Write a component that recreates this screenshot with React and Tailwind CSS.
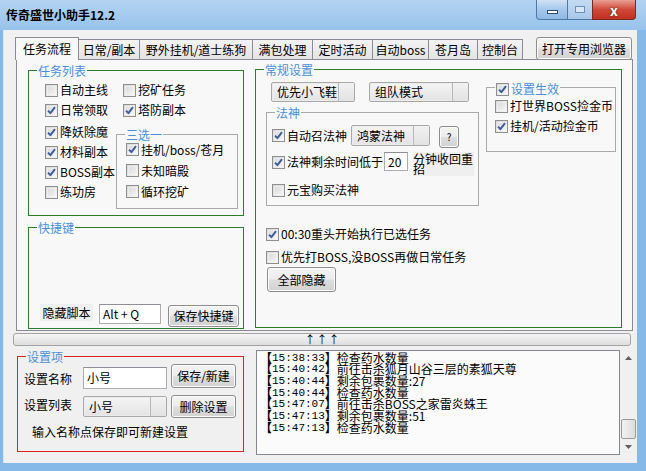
import clsx from 'clsx';

const FONT = "font-['Noto_Sans_CJK_SC','Noto_Sans',sans-serif]";

const Check = ({ checked }) => (
  <span className="relative flex h-[13px] w-[13px] shrink-0 items-center justify-center border border-[#8e8f8f] bg-[linear-gradient(135deg,#d6d6d6,#f7f7f7)]">
    <span className="absolute inset-[1px] border border-[#f6f6f6]/60" />
    {checked && (
      <svg width="11" height="11" viewBox="0 0 11 11" className="relative">
        <path d="M2 5.6 L4.4 8.2 L9 2.2" fill="none" stroke="#3b5b9c" strokeWidth="1.9" strokeLinejoin="round" />
      </svg>
    )}
  </span>
);

const CheckItem = ({ checked, label, className }) => (
  <div className={clsx('flex h-[20px] items-center gap-[2px] whitespace-nowrap', className)}>
    <Check checked={checked} />
    <span className="leading-none">{label}</span>
  </div>
);

const Group = ({ title, color = 'border-[#2b7d2b]', titleBg = 'bg-[#f8f8f8]', className, children, titleNode }) => (
  <div className={clsx('relative border', color, className)}>
    <span className={clsx('absolute left-[8px] top-[-9px] px-[1px] leading-[17px] text-[#4a8fdc]', titleBg)}>
      {titleNode || title}
    </span>
    {children}
  </div>
);

const Btn = ({ className, children }) => (
  <div className={clsx('flex items-center justify-center whitespace-nowrap rounded-[3px] border border-[#8d8d8d] bg-[linear-gradient(#f4f4f4,#ececec_48%,#dedede_52%,#d2d2d2)] shadow-[inset_0_0_0_1px_#fbfbfb]', className)}>
    {children}
  </div>
);

const Combo = ({ className, text }) => (
  <div className={clsx('flex rounded-[2px] border border-[#a9a9a9] bg-[#ececec]', className)}>
    <div className="m-[1px] flex flex-1 items-center bg-[linear-gradient(#f4f4f4,#e4e4e4)] pl-[4px] leading-none whitespace-nowrap">{text}</div>
    <div className="w-[16px] border-l border-[#b8b8b8] bg-[linear-gradient(#f2f2f2,#e2e2e2)]" />
  </div>
);

const Input = ({ className, text }) => (
  <div className={clsx('flex items-center border border-[#abadb3] border-t-[#8e9097] bg-white pl-[3px] leading-none whitespace-nowrap', className)}>
    {text}
  </div>
);

const tabs = [
  ['任务流程', 'w-[64px]'],
  ['日常/副本', 'w-[62px]'],
  ['野外挂机/道士练狗', 'w-[114px]'],
  ['满包处理', 'w-[61px]'],
  ['定时活动', 'w-[61px]'],
  ['自动boss', 'w-[57px]'],
  ['苍月岛', 'w-[50px]'],
  ['控制台', 'w-[46px]'],
];

const logs = [
  ['15:38:33', '检查药水数量'],
  ['15:40:42', '前往击杀狐月山谷三层的素狐天尊'],
  ['15:40:44', '剩余包裹数量:27'],
  ['15:40:44', '检查药水数量'],
  ['15:47:07', '前往击杀BOSS之家雷炎蛛王'],
  ['15:47:13', '剩余包裹数量:51'],
  ['15:47:13', '检查药水数量'],
];

export default function App() {
  return (
    <div className={clsx('flex h-[471px] w-[646px] flex-col overflow-hidden bg-[#86b9e8] text-[12px] text-black', FONT)}>
      {/* title bar */}
      <div className="flex h-[30px] shrink-0 items-start bg-[linear-gradient(#b3d3f1,#97c3ec)]">
        <div className="mt-[6px] pl-[6px] text-[12px] font-bold leading-[18px]">传奇盛世小助手12.2</div>
        <div className="ml-auto mr-[10px] flex h-[20px]">
          <div className="flex w-[32px] items-center justify-center rounded-bl-[4px] border border-t-0 border-[#4f78a6] bg-[linear-gradient(#cfe2f5,#a6c7ea_50%,#8fb8e3)]">
            <span className="mt-[5px] h-[4px] w-[11px] border border-[#2f4b6b] bg-white" />
          </div>
          <div className="flex w-[24px] items-center justify-center border-b border-[#4f78a6] bg-[linear-gradient(#c3dbf2,#a8c9ea)]">
            <span className="h-[7px] w-[10px] border border-[#6f8fb3] bg-[#d7e6f5]" />
          </div>
          <div className="flex w-[44px] items-center justify-center rounded-br-[4px] border border-t-0 border-[#7a2a22] bg-[linear-gradient(#e8a092,#d0493a_50%,#c0301f)]">
            <span className="text-[14px] font-bold leading-none text-white [text-shadow:0_0_2px_#3a1010]">x</span>
          </div>
        </div>
      </div>

      {/* client */}
      <div className="mb-[8px] ml-[4px] mr-[9px] flex flex-1 flex-col bg-[#f0f0f0] shadow-[-1px_0_0_#d6e8f8]">
        {/* tab strip */}
        <div className="ml-[11px] mr-[5px] mt-[7px] flex h-[22px] items-end">
          {tabs.map(([t, w], i) => (
            <div
              key={t}
              className={clsx(
                'relative -ml-px flex items-center justify-center whitespace-nowrap border border-[#898c95] first:ml-0',
                w,
                i === 0
                  ? 'z-10 h-[23px] -mb-px border-b-0 bg-[#f8f8f8] pb-[1px]'
                  : 'h-[20px] border-b-0 bg-[linear-gradient(#f3f3f3,#e4e4e4)]'
              )}
            >
              {t}
            </div>
          ))}
          <Btn className="relative z-10 mb-[-1px] ml-auto h-[23px] w-[96px]">打开专用浏览器</Btn>
        </div>

        {/* tab page */}
        <div className="ml-[12px] flex h-[272px] w-[617px] border border-[#898c95] bg-[#f8f8f8] pl-[11px] pt-[10px]">
          {/* left column */}
          <div className="flex w-[216px] flex-col">
            <Group title="任务列表" className="flex h-[146px] pl-[16px] pt-[9px]">
              <div className="flex w-[71px] flex-col">
                <CheckItem label="自动主线" />
                <CheckItem checked label="日常领取" />
                <CheckItem checked label="降妖除魔" className="mt-[2px]" />
                <CheckItem checked label="材料副本" />
                <CheckItem checked label="BOSS副本" />
                <CheckItem label="练功房" />
              </div>
              <div className="flex flex-col">
                <CheckItem label="挖矿任务" className="pl-[7px]" />
                <CheckItem checked label="塔防副本" className="pl-[7px]" />
                <Group title="三选一" color="border-[#a9a9a9]" className="mt-[14px] flex h-[75px] w-[122px] flex-col pl-[9px] pt-[4px]">
                  <CheckItem checked label="挂机/boss/苍月" className="h-[21px]" />
                  <CheckItem label="未知暗殿" className="h-[21px]" />
                  <CheckItem label="循环挖矿" className="h-[21px]" />
                </Group>
              </div>
            </Group>
            <Group title="快捷键" className="mt-[11px] flex h-[102px] items-start pt-[76px]">
              <div className="ml-[11px] flex h-[17px] w-[53px] items-center justify-center bg-[#efefef]">隐藏脚本</div>
              <Input className="ml-[6px] h-[20px] w-[62px]" text="Alt + Q" />
              <Btn className="ml-[7px] mt-[1px] h-[22px] w-[71px]">保存快捷键</Btn>
            </Group>
          </div>

          {/* right column */}
          <Group title="常规设置" className="-mt-px ml-[11px] flex h-[259px] w-[367px] flex-col pl-[10px]">
            <div className="flex">
              <div className="flex w-[213px] flex-col">
                <div className="flex pl-[5px] pt-[12px]">
                  <Combo className="h-[20px] w-[84px]" text="优先小飞鞋" />
                  <Combo className="ml-[14px] h-[20px] w-[100px]" text="组队模式" />
                </div>
                <Group title="法神" color="border-[#a9a9a9]" className="mt-[10px] flex h-[94px] flex-col pl-[5px] pt-[11px]">
                  <div className="flex h-[23px] items-center">
                    <CheckItem checked label="自动召法神" className="w-[79px]" />
                    <Combo className="h-[21px] w-[79px]" text="鸿蒙法神" />
                    <Btn className="ml-[9px] mt-[2px] h-[22px] w-[20px] text-[10px]">?</Btn>
                  </div>
                  <div className="mt-[5px] flex items-start">
                    <CheckItem checked label="法神剩余时间低于" className="w-[112px]" />
                    <Input className="h-[19px] w-[24px] pl-[2px]" text="20" />
                    <div className="ml-[5px] h-[24px] w-[61px] bg-[#efefef] pt-[2px] leading-[10px]">分钟收回重招</div>
                  </div>
                  <CheckItem label="元宝购买法神" className="mt-[4px]" />
                </Group>
              </div>
              <Group
                titleNode={<CheckItem checked label="设置生效" className="h-[17px]" />}
                color="border-[#a9a9a9]"
                className="ml-[7px] mt-[17px] flex h-[65px] w-[130px] flex-col pl-[8px] pt-[8px]"
              >
                <CheckItem label="打世界BOSS捡金币" />
                <CheckItem checked label="挂机/活动捡金币" />
              </Group>
            </div>
            <CheckItem checked label="00:30重头开始执行已选任务" className="mt-[18px]" />
            <CheckItem label="优先打BOSS,没BOSS再做日常任务" className="mt-[3px]" />
            <Btn className="ml-[1px] h-[25px] w-[69px]">全部隐藏</Btn>
          </Group>
        </div>

        {/* splitter */}
        <div className="ml-[9px] mt-[2px] flex h-[13px] w-[618px] items-center justify-center rounded-[3px] border border-[#a3a3a3] bg-[linear-gradient(#f5f5f5,#dedede)]">
          <span className="w-[12px] text-center text-[11px] leading-none">↑</span>
          <span className="w-[12px] text-center text-[11px] leading-none">↑</span>
          <span className="w-[12px] text-center text-[11px] leading-none">↑</span>
        </div>

        {/* bottom */}
        <div className="flex flex-1 items-start">
          <div className="ml-[13px] mt-[10px] h-[96px] w-[227px]">
            <Group title="设置项" color="border-[#d9232b]" titleBg="bg-[#f0f0f0]" className="flex h-full flex-col pl-[6px] pt-[7px]">
              <div className="flex items-start">
                <div className="mt-[6px] w-[59px] leading-[17px]">设置名称</div>
                <Input className="mt-[3px] h-[22px] w-[84px]" text="小号" />
                <Btn className="ml-[4px] h-[24px] w-[65px]">保存/新建</Btn>
              </div>
              <div className="mt-[6px] flex items-start">
                <div className="mt-[1px] w-[59px] leading-[17px]">设置列表</div>
                <Combo className="mt-[1px] h-[21px] w-[84px]" text="小号" />
                <Btn className="ml-[4px] h-[23px] w-[65px]">删除设置</Btn>
              </div>
              <div className="mt-[5px] pl-[8px] leading-[17px]">输入名称点保存即可新建设置</div>
            </Group>
          </div>
          <div className="ml-[12px] mt-[4px] flex h-[105px] w-[364px] flex-col border border-[#828790] bg-[#fbfbfb] pl-[3px] pt-[1px]">
            {logs.map(([t, m], i) => (
              <div key={i} className="flex h-[11.67px] shrink-0 items-center overflow-visible whitespace-nowrap text-[12px] leading-[12px]">
                <span className="font-bold">【</span>
                <span className="font-['Liberation_Mono',monospace] text-[11px]">{t}</span>
                <span><span className="font-bold">】</span>{m}</span>
              </div>
            ))}
          </div>
          <div className="mt-[4px] flex h-[105px] w-[17px] flex-col items-center">
            <svg width="7" height="4" viewBox="0 0 7 4" className="mt-[6px]"><path d="M0 4 L3.5 0 L7 4Z" fill="#606060" /></svg>
            <div className="mt-auto h-[20px] w-[15px] rounded-[2px] border border-[#9a9a9a] bg-[linear-gradient(90deg,#f2f2f2,#dcdcdc)]" />
            <svg width="7" height="4" viewBox="0 0 7 4" className="mb-[6px] mt-[6px]"><path d="M0 0 L3.5 4 L7 0Z" fill="#606060" /></svg>
          </div>
        </div>
      </div>
    </div>
  );
}
